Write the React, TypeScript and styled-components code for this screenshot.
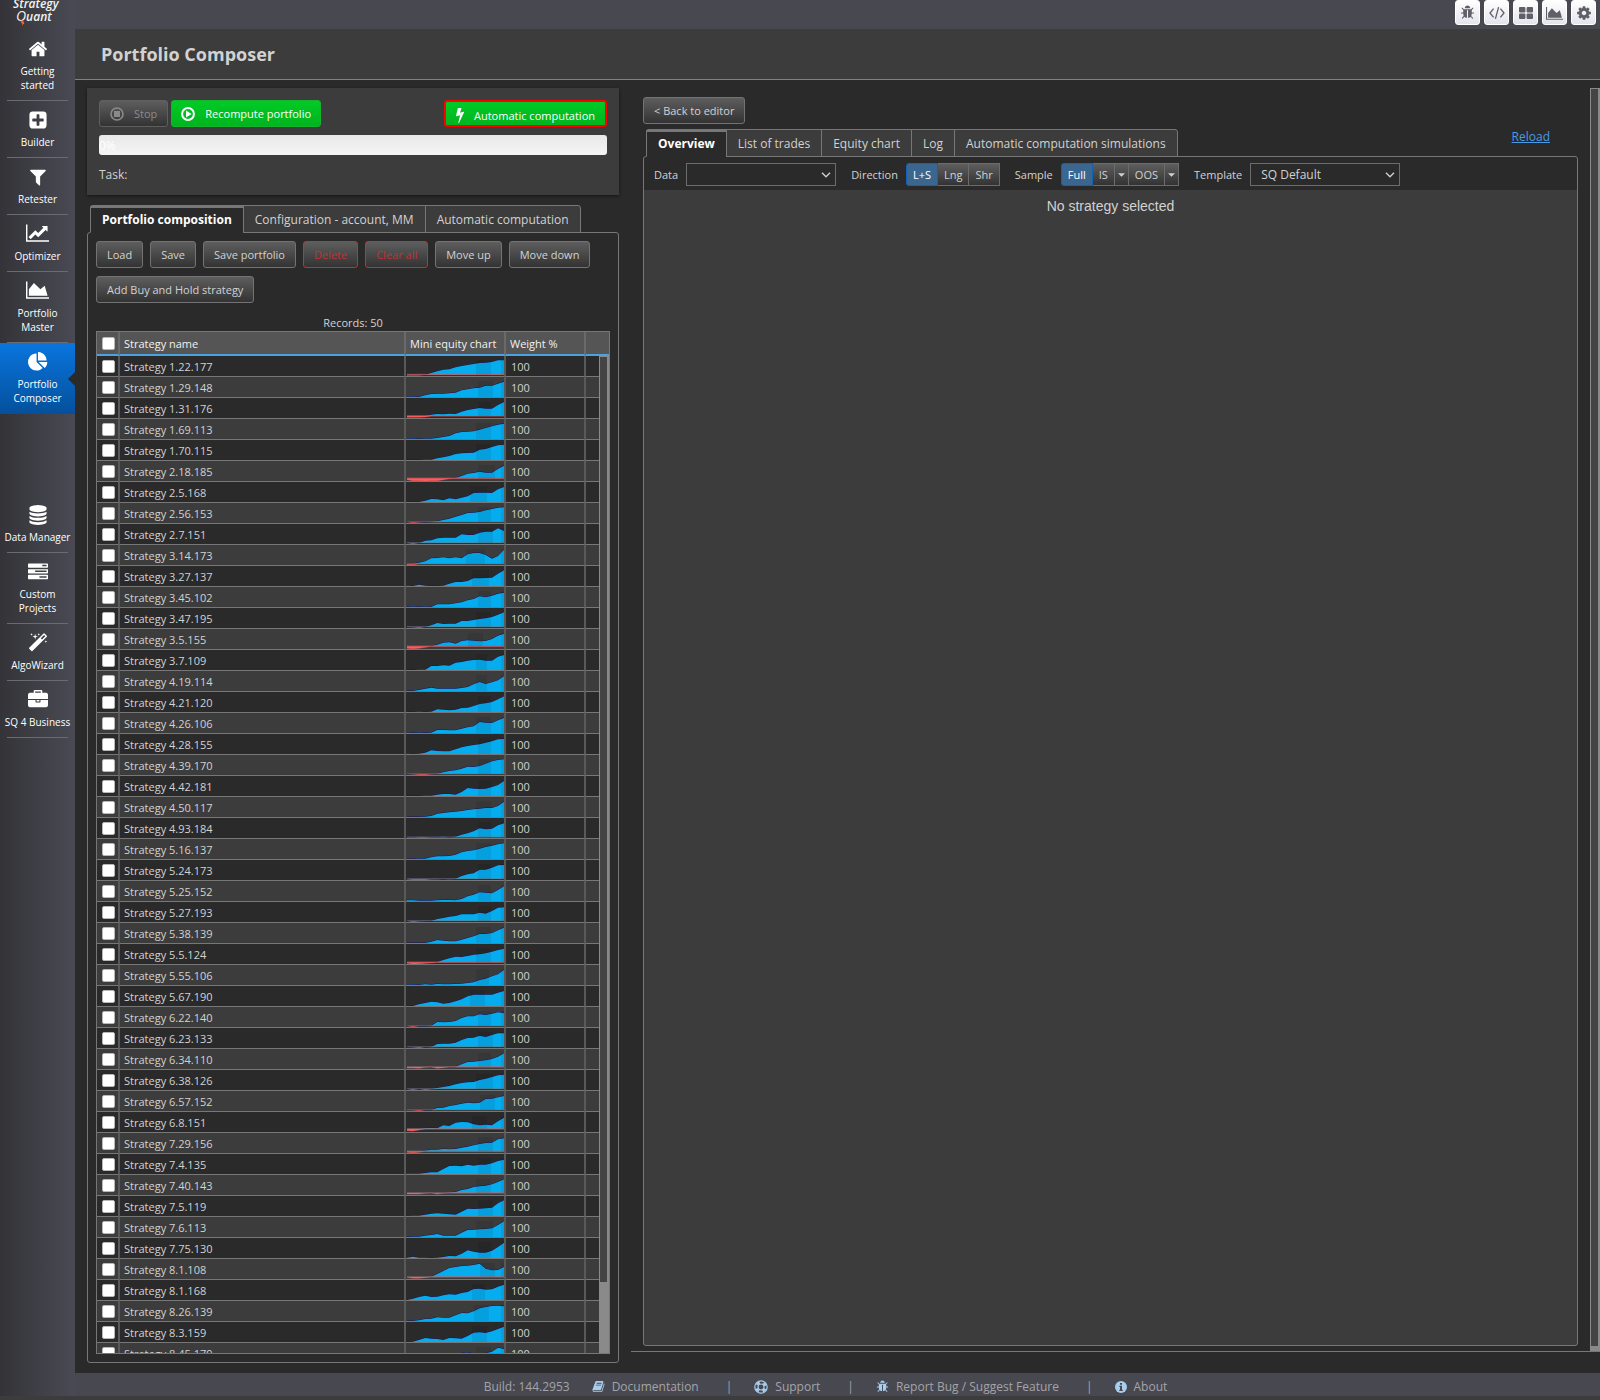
import React, { useState } from "react";
import styled, { createGlobalStyle, css } from "styled-components";

const color = {
  page: "#2a2a2a",
  panel: "#3c3c3c",
  bar: "#484851",
  line: "#777777",
  text: "#d2d2d2",
  blue: "#4aa3e0",
  link: "#4a9be6",
  danger: "#c43131",
};

const GlobalStyle = createGlobalStyle`
  *, *::before, *::after { box-sizing: border-box; }
  body {
    margin: 0;
    background: ${color.panel};
    color: ${color.text};
    font-family: "Open Sans", "Noto Sans", sans-serif;
    font-size: 11px;
  }
  button, select, input { font: inherit; color: inherit; }
  a { color: inherit; text-decoration: none; }
`;

/* ---------- icons ---------- */

type IconDef = { box?: number; d: string };

const icons: Record<string, IconDef> = {
  home: {
    d: "M1472 992v480q0 26-19 45t-45 19h-384v-384h-256v384h-384q-26 0-45-19t-19-45v-480q0-1 .5-3t.5-3l575-474 575 474q1 2 1 6zm223-69l-62 74q-8 9-21 11h-3q-13 0-21-7l-692-577-692 577q-12 8-24 7-13-2-21-11l-62-74q-8-10-7-23.5t11-21.5l719-599q32-26 76-26t76 26l244 204v-195q0-14 9-23t23-9h192q14 0 23 9t9 23v408l219 182q10 8 11 21.5t-7 23.5z",
  },
  plus: {
    d: "M1408 960v-128q0-26-19-45t-45-19h-320v-320q0-26-19-45t-45-19h-128q-26 0-45 19t-19 45v320h-320q-26 0-45 19t-19 45v128q0 26 19 45t45 19h320v320q0 26 19 45t45 19h128q26 0 45-19t19-45v-320h320q26 0 45-19t19-45zm256-544v960q0 119-84.5 203.5t-203.5 84.5h-960q-119 0-203.5-84.5t-84.5-203.5v-960q0-119 84.5-203.5t203.5-84.5h960q119 0 203.5 84.5t84.5 203.5z",
  },
  filter: {
    d: "M1595 295q17 41-14 70l-493 493v742q0 42-39 59-13 5-25 5-27 0-45-19l-256-256q-19-19-19-45v-486l-493-493q-31-29-14-70 17-39 59-39h1280q42 0 59 39z",
  },
  line: {
    box: 2048,
    d: "M2048 1536v128h-2048v-1536h128v1408h1920zm-128-1248v435q0 21-19.5 29.5t-35.5-7.5l-121-121-633 633q-10 10-23 10t-23-10l-233-233-416 416-192-192 585-585q10-10 23-10t23 10l233 233 464-464-121-121q-16-16-7.5-35.5t29.5-19.5h435q14 0 23 9t9 23z",
  },
  area: {
    box: 2048,
    d: "M2048 1536v128h-2048v-1536h128v1408h1920zm-384-1024l256 896h-1664v-576l448-576 576 576z",
  },
  pie: {
    d: "M768 890l546 546q-106 108-247.5 168t-298.5 60q-209 0-385.5-103t-279.5-279.5-103-385.5 103-385.5 279.5-279.5 385.5-103v762zm187 6h773q0 157-60 298.5t-168 247.5zm709-128h-768v-768q209 0 385.5 103t279.5 279.5 103 385.5z",
  },
  database: {
    d: "M896 768q237 0 443-43t325-127v170q0 69-103 128t-280 93.5-385 34.5-385-34.5-280-93.5-103-128v-170q119 84 325 127t443 43zm0 768q237 0 443-43t325-127v170q0 69-103 128t-280 93.5-385 34.5-385-34.5-280-93.5-103-128v-170q119 84 325 127t443 43zm0-384q237 0 443-43t325-127v170q0 69-103 128t-280 93.5-385 34.5-385-34.5-280-93.5-103-128v-170q119 84 325 127t443 43zm0-1152q208 0 385 34.5t280 93.5 103 128v128q0 69-103 128t-280 93.5-385 34.5-385-34.5-280-93.5-103-128v-128q0-69 103-128t280-93.5 385-34.5z",
  },
  tasks: {
    d: "M1024 1408h640v-128h-640v128zm-384-512h1024v-128h-1024v128zm640-512h384v-128h-384v128zm512 832v256q0 26-19 45t-45 19h-1664q-26 0-45-19t-19-45v-256q0-26 19-45t45-19h1664q26 0 45 19t19 45zm0-512v256q0 26-19 45t-45 19h-1664q-26 0-45-19t-19-45v-256q0-26 19-45t45-19h1664q26 0 45 19t19 45zm0-512v256q0 26-19 45t-45 19h-1664q-26 0-45-19t-19-45v-256q0-26 19-45t45-19h1664q26 0 45 19t19 45z",
  },
  wand: {
    d: "M1254 581l293-293-107-107-293 293zm447-293q0 27-18 45l-1286 1286q-18 18-45 18t-45-18l-198-198q-18-18-18-45t18-45l1286-1286q18-18 45-18t45 18l198 198q18 18 18 45zm-1351-190l98 30-98 30-30 98-30-98-98-30 98-30 30-98zm350 162l196 60-196 60-60 196-60-196-196-60 196-60 60-196zm930 478l98 30-98 30-30 98-30-98-98-30 98-30 30-98zm-640-640l98 30-98 30-30 98-30-98-98-30 98-30 30-98z",
  },
  briefcase: {
    d: "M640 256h512v-128h-512v128zm1152 640v480q0 66-47 113t-113 47h-1472q-66 0-113-47t-47-113v-480h672v160q0 26 19 45t45 19h320q26 0 45-19t19-45v-160h672zm-768 0v128h-256v-128h256zm768-480v384h-1792v-384q0-66 47-113t113-47h352v-160q0-40 28-68t68-28h576q40 0 68 28t28 68v160h352q66 0 113 47t47 113z",
  },
  bug: {
    d: "M1696 960q0 26-19 45t-45 19h-224q0 171-67 290l208 209q19 19 19 45t-19 45q-18 19-45 19t-45-19l-198-197q-5 5-15 13t-42 28.5-65 36.5-82 29-97 13v-896h-128v896q-51 0-101.5-13.5t-87-33-66-39-43.5-32.5l-15-14-183 207q-20 21-48 21-24 0-43-16-19-18-20.5-44.5t15.5-46.5l202-227q-58-114-58-274h-224q-26 0-45-19t-19-45 19-45 45-19h224v-294l-173-173q-19-19-19-45t19-45 45-19 45 19l173 173h844l173-173q19-19 45-19t45 19 19 45-19 45l-173 173v294h224q26 0 45 19t19 45zm-480-576h-640q0-133 93.5-226.5t226.5-93.5 226.5 93.5 93.5 226.5z",
  },
  cog: {
    d: "M1152 896q0-106-75-181t-181-75-181 75-75 181 75 181 181 75 181-75 75-181zm512-109v222q0 12-8 23t-20 13l-185 28q-19 54-39 91 35 50 107 138 10 12 10 25t-9 23q-27 37-99 108t-94 71q-12 0-26-9l-138-108q-44 23-91 38-16 136-29 186-7 28-36 28h-222q-14 0-24.5-8.5t-11.5-21.5l-28-184q-49-16-90-37l-141 107q-10 9-25 9-14 0-25-11-126-114-165-168-7-10-7-23 0-12 8-23 15-21 51-66.5t54-70.5q-27-50-41-99l-183-27q-13-2-21-12.5t-8-23.5v-222q0-12 8-23t19-13l186-28q14-46 39-92-40-57-107-138-10-12-10-24 0-10 9-23 26-36 98.5-107.5t94.5-71.5q13 0 26 10l138 107q44-23 91-38 16-136 29-186 7-28 36-28h222q14 0 24.5 8.5t11.5 21.5l28 184q49 16 90 37l142-107q9-9 24-9 13 0 25 10 129 119 165 170 7 8 7 22 0 12-8 23-15 21-51 66.5t-54 70.5q26 50 41 98l183 28q13 2 21 12.5t8 23.5z",
  },
  book: {
    d: "M1703 478q40 57 18 129l-275 906q-19 64-76.5 107.5t-122.5 43.5h-923q-77 0-148.5-53.5t-99.5-131.5q-24-67-2-127 0-4 3-27t4-37q1-8-3-21.5t-3-19.5q2-11 8-21t16.5-23.5 16.5-23.5q23-38 45-91.5t30-91.5q3-10 .5-30t-.5-28q3-11 17-28t17-23q21-36 42-92t25-90q1-9-2.5-32t.5-28q4-13 22-30.5t22-22.5q19-26 42.5-84.5t27.5-96.5q1-8-3-25.5t-2-26.5q2-8 9-18t18-23 17-21q8-12 16.5-30.5t15-35 16-36 19.5-32 26.5-23.5 36-11.5 47.5 5.5l-1 3q38-9 51-9h761q74 0 114 56t18 130l-274 906q-36 119-71.5 153.5t-128.5 34.5h-869q-27 0-38 15-11 16-1 43 24 70 144 70h923q29 0 56-15.5t35-41.5l300-987q7-22 5-57 38 15 59 43zm-1064 2q-4 13 2 22.5t20 9.5h608q13 0 25.5-9.5t16.5-22.5l21-64q4-13-2-22.5t-20-9.5h-608q-13 0-25.5 9.5t-16.5 22.5zm-83 256q-4 13 2 22.5t20 9.5h608q13 0 25.5-9.5t16.5-22.5l21-64q4-13-2-22.5t-20-9.5h-608q-13 0-25.5 9.5t-16.5 22.5z",
  },
};

function Icon({ name, size = 16 }: { name: string; size?: number }) {
  const { box = 1792, d } = icons[name];
  return (
    <svg width={size} height={size} viewBox={`0 0 ${box} ${box}`} fill="currentColor" aria-hidden="true">
      <path d={d} />
    </svg>
  );
}

const BoltIcon = () => (
  <svg width="8" height="15" viewBox="448 128 896 1664" fill="currentColor" aria-hidden="true">
    <path d="M1333 566q18 20 7 44l-540 1157q-13 25-42 25-4 0-14-2-17-5-25.5-19t-4.5-30l197-808-406 101q-4 1-12 1-18 0-31-11-18-15-13-39l201-825q4-14 16-23t28-9h328q19 0 32 12.5t13 29.5q0 8-5 18l-171 463 396-98q8-2 12-2 19 0 34 15z" />
  </svg>
);

const CodeIcon = () => (
  <svg width="16" height="14" viewBox="0 0 16 14" fill="none" stroke="currentColor" strokeWidth="1.3" aria-hidden="true">
    <path d="M4.6 2.6L1 7l3.6 4.4M11.4 2.6L15 7l-3.6 4.4M9.6 1.2L6.4 12.8" />
  </svg>
);

const TilesIcon = () => (
  <svg width="14" height="14" viewBox="0 0 14 14" fill="currentColor" aria-hidden="true">
    <rect x="0" y="1" width="6.4" height="5.4" rx="1" />
    <rect x="7.6" y="1" width="6.4" height="5.4" rx="1" />
    <rect x="0" y="7.6" width="6.4" height="5.4" rx="1" />
    <rect x="7.6" y="7.6" width="6.4" height="5.4" rx="1" />
  </svg>
);

const StopIcon = () => (
  <svg width="14" height="14" viewBox="0 0 14 14" aria-hidden="true">
    <circle cx="7" cy="7" r="6" fill="none" stroke="currentColor" strokeWidth="1.6" />
    <rect x="4" y="4" width="6" height="6" fill="currentColor" />
  </svg>
);

const PlayIcon = () => (
  <svg width="14" height="14" viewBox="0 0 14 14" aria-hidden="true">
    <circle cx="7" cy="7" r="5.9" fill="none" stroke="currentColor" strokeWidth="2" />
    <path d="M5 3.6L10.6 7 5 10.4z" fill="currentColor" />
  </svg>
);

const RingIcon = () => (
  <svg width="14" height="14" viewBox="0 0 14 14" fill="none" stroke="currentColor" aria-hidden="true">
    <circle cx="7" cy="7" r="6.2" strokeWidth="1.2" />
    <circle cx="7" cy="7" r="3" strokeWidth="1.2" />
    <circle cx="7" cy="7" r="4.6" strokeWidth="2.6" strokeDasharray="3.4 3.83" strokeDashoffset="-1.9" />
  </svg>
);

const InfoIcon = () => (
  <svg width="12" height="12" viewBox="0 0 12 12" aria-hidden="true">
    <circle cx="6" cy="6" r="6" fill="currentColor" />
    <path d="M5 2h2v1.8H5zM4.4 4.8H7v3.9h.8V10H4.3V8.7H5V6h-.6z" fill={color.bar} />
  </svg>
);

const Caret = () => (
  <svg width="7" height="4" viewBox="0 0 8 4" fill="currentColor" aria-hidden="true">
    <path d="M0 0h8L4 4z" />
  </svg>
);

/* ---------- shell ---------- */

const Shell = styled.div`
  display: flex;
  height: 100vh;
  padding-bottom: 4px;
  background: ${color.panel};
`;

const Sidebar = styled.nav`
  display: flex;
  flex-direction: column;
  flex: 0 0 75px;
  background: linear-gradient(90deg, #333338, #4a4a54);
  color: #ffffff;
  font-size: 10px;
`;

const Brand = styled.a`
  display: block;
  height: 30px;
  overflow: hidden;
`;

const NavGroup = styled.div`
  display: flex;
  flex-direction: column;

  & + & {
    margin-top: 82px;
  }
`;

const NavItem = styled.a<{ $active?: boolean }>`
  position: relative;
  display: flex;
  flex-direction: column;
  align-items: center;
  gap: 6px;
  padding: 10px 0 9px;
  line-height: 14px;
  text-align: center;
  white-space: pre-line;
  background: ${(p) => (p.$active ? "linear-gradient(#0a75de, #04509b)" : "none")};

  &::after {
    content: "";
    position: absolute;
    ${(p) =>
      p.$active
        ? css`
            right: 0;
            top: 29px;
            border: 7px solid transparent;
            border-left-width: 0;
            border-right-color: ${color.page};
          `
        : css`
            left: 7px;
            right: 7px;
            bottom: 0;
            height: 1px;
            background: #6a6a72;
          `}
  }
`;

const NavIcon = styled.span`
  display: flex;
  align-items: center;
  justify-content: center;
  height: 18px;
`;

const Main = styled.div`
  display: flex;
  flex-direction: column;
  flex: 1;
  min-width: 0;
`;

const TopBar = styled.div`
  display: flex;
  justify-content: flex-end;
  gap: 4px;
  height: 29px;
  padding: 0 4px 4px 0;
  background: ${color.bar};
`;

const ToolButton = styled.button<{ $low?: boolean }>`
  display: flex;
  align-items: center;
  justify-content: center;
  width: 25px;
  padding: ${(p) => (p.$low ? 4 : 0)}px 0 0;
  border: 1px solid #ffffff;
  border-radius: 3px;
  background: linear-gradient(#ffffff, #e4e4ec);
  color: #5f5f68;
`;

const TitleBar = styled.header`
  display: flex;
  align-items: center;
  height: 51px;
  padding: 0 26px;
  background: ${color.panel};
  border-bottom: 1px solid #808080;
`;

const Title = styled.h1`
  margin: 0;
  font-size: 18px;
  line-height: 24px;
  font-weight: 700;
`;

const Content = styled.main`
  display: grid;
  grid-template-columns: minmax(0, 556fr) minmax(0, 969fr);
  flex: 1;
  min-height: 0;
  background: ${color.page};
`;

const Footer = styled.footer`
  display: flex;
  align-items: center;
  justify-content: center;
  height: 23px;
  padding: 4px 24px 0 0;
  background: ${color.bar};
  color: #a4a4a8;
  font-size: 12px;
  line-height: 16px;
`;

const Build = styled.span`
  margin-right: 22px;
`;

const FooterLink = styled.a`
  display: flex;
  align-items: center;
  gap: 7px;

  svg {
    color: #a9cdec;
  }
`;

const FooterBar = styled.span`
  margin: 0 22px 0 27px;
`;

/* ---------- shared controls ---------- */

const Button = styled.button<{ $danger?: boolean }>`
  display: inline-flex;
  align-items: center;
  gap: 10px;
  height: 27px;
  padding: 0 10px;
  border: 1px solid ${(p) => (p.$danger ? color.danger : "#737373")};
  border-radius: 3px;
  background: linear-gradient(#5e5e5e, #333333);
  color: ${(p) => (p.$danger ? color.danger : color.text)};
  white-space: nowrap;

  &:disabled {
    color: #8a8a8a;
    border-color: #5f5f5f;
  }
`;

const GreenButton = styled(Button)<{ $outlined?: boolean }>`
  padding: 0 9px;
  border: 1px solid #14b52c;
  background: linear-gradient(#00cb26, #00b41f);
  color: #ffffff;
  font-weight: 500;
  ${(p) =>
    p.$outlined &&
    css`
      margin-left: auto;
      padding: 3px 10px 0;
      border: 2px solid #ff0000;
    `}
`;

const Tabs = styled.div`
  display: flex;
  position: relative;
  height: 28px;
  margin-bottom: -1px;
  padding-left: 3px;
`;

const Tab = styled.button<{ $active?: boolean }>`
  margin-right: -1px;
  padding: 0 11px;
  border: 1px solid ${color.line};
  background: ${color.panel};
  color: ${color.text};
  font-size: 12px;
  white-space: nowrap;

  &:first-child {
    border-top-left-radius: 3px;
  }
  &:last-of-type {
    border-top-right-radius: 3px;
  }

  ${(p) =>
    p.$active &&
    css`
      border-top: 3px solid ${color.line};
      border-bottom-color: ${color.page};
      padding-bottom: 2px;
      background: ${color.page};
      color: #ffffff;
      font-weight: 700;
    `}
`;

const Scrollbar = styled.div`
  width: 10px;
  background: #8a8a8a;
`;

const Thumb = styled.div`
  border: 1px solid #8a8a8a;
  border-right-width: 2px;
  background: #444444;
`;

/* ---------- left column ---------- */

const LeftColumn = styled.section`
  display: flex;
  flex-direction: column;
  min-height: 0;
  padding: 8px 12px 10px;
`;

const RunBox = styled.div`
  margin-bottom: 10px;
  padding: 12px;
  background: ${color.panel};
  box-shadow: 0 1px 3px rgba(0, 0, 0, 0.5);
`;

const RunButtons = styled.div`
  display: flex;
  gap: 3px;
`;

const Progress = styled.div`
  height: 20px;
  margin: 8px 0 12px;
  border-radius: 3px;
  background: linear-gradient(#e8e8e8, #f5f5f5);
  color: #ffffff;
  font-size: 12px;
  line-height: 21px;
`;

const Task = styled.div`
  font-size: 12px;
  line-height: 16px;
`;

const Panel = styled.div`
  display: flex;
  flex-direction: column;
  flex: 1;
  min-height: 0;
  border: 1px solid ${color.line};
  border-radius: 3px;
`;

const CompositionPanel = styled(Panel)`
  padding: 8px;
`;

const Actions = styled.div`
  display: flex;
  flex-wrap: wrap;
  gap: 8px 7px;
`;

const Records = styled.div`
  margin-top: 12px;
  padding-bottom: 1px;
  line-height: 15px;
  text-align: center;
`;

const TableFrame = styled.div`
  position: relative;
  flex: 1;
  min-height: 0;
  overflow: hidden;
  border: 1px solid ${color.line};
`;

const TableScroll = styled(Scrollbar)`
  position: absolute;
  top: 24px;
  right: 0;
  bottom: 0;
`;

const Table = styled.table`
  width: 100%;
  table-layout: fixed;
  border-collapse: separate;
  border-spacing: 0;
  line-height: 15px;

  th,
  td {
    padding: 0 0 0 4px;
    text-align: left;
    white-space: nowrap;
    border-right: 2px solid #595959;
  }
  th {
    height: 24px;
    background: #555555;
    color: #f2f2f2;
    font-weight: 500;
    border-right-color: #6a6a6a;
    border-bottom: 2px solid ${color.blue};
  }
  td {
    height: 21px;
    border-bottom: 1px solid ${color.line};
  }
  th:first-child,
  td:first-child {
    padding-left: 5px;
  }
  th:last-child,
  td:last-child {
    border-right: 0;
  }
  tbody tr:nth-child(even) {
    background: ${color.panel};
  }
`;

const ChartCell = styled.td`
  && {
    padding-left: 1px;
  }

  svg {
    display: block;
  }
`;

const WeightCell = styled.td`
  && {
    padding-left: 5px;
  }
`;

const Check = styled.input`
  appearance: none;
  display: block;
  width: 13px;
  height: 13px;
  margin: 1px 0 0;
  border: 1px solid #b8b8b8;
  border-radius: 2px;
  background: #ffffff;

  &:checked {
    background: ${color.blue};
  }
`;

/* ---------- right column ---------- */

const RightColumn = styled.section`
  display: flex;
  min-height: 0;
  margin: 8px 0 21px;
  border-bottom: 1px solid ${color.line};
`;

const Results = styled.div`
  display: flex;
  flex-direction: column;
  flex: 1;
  min-width: 0;
  padding: 9px 12px 5px;
`;

const BackRow = styled.div`
  display: flex;
  margin-bottom: 5px;
`;

const Reload = styled.a`
  margin: 0 28px 0 auto;
  color: ${color.link};
  font-size: 12px;
  line-height: 16px;
  text-decoration: underline;
`;

const ResultsPanel = styled(Panel)`
  background: ${color.panel};
`;

const Toolbar = styled.div`
  display: flex;
  align-items: center;
  gap: 15px;
  height: 33px;
  padding: 2px 10px 0;
  border-radius: 3px 3px 0 0;
  background: ${color.page};
`;

const Field = styled.div`
  display: flex;
  align-items: center;
  gap: 8px;
`;

const Select = styled.select`
  appearance: none;
  width: 150px;
  height: 23px;
  padding: 0 10px;
  border: 1px solid #6c6c6c;
  border-radius: 0;
  background: ${color.page};
  font-size: 12px;
`;

const SelectBox = styled.span`
  display: grid;
  align-items: center;

  select,
  svg {
    grid-area: 1 / 1;
  }
  svg {
    justify-self: end;
    margin-right: 5px;
    pointer-events: none;
  }
`;

const Segments = styled.div`
  display: flex;
`;

const Segment = styled.button<{ $on?: boolean; $caret?: boolean }>`
  display: flex;
  align-items: center;
  height: 23px;
  padding: 0 ${(p) => (p.$caret ? 3 : 6)}px;
  border: 1px solid #6c6c6c;
  border-left-width: 0;
  background: linear-gradient(#5e5e5e, #333333);

  &:first-child {
    border-radius: 3px 0 0 3px;
    border-left-width: 1px;
  }

  ${(p) =>
    p.$on &&
    css`
      border-color: #1660ad;
      background: #3a668f;
      color: #ffffff;
      font-weight: 500;
    `}
`;

const Empty = styled.p`
  margin: 8px 0 0;
  font-family: "Liberation Sans", Arial, sans-serif;
  font-size: 14px;
  line-height: 16px;
  text-align: center;
`;

/* ---------- data ---------- */

type Strategy = { name: string; depth: number; band: [number, number]; equity: number[] };

const s = (name: string, depth: number, band: [number, number], equity: number[]): Strategy => ({
  name: `Strategy ${name}`,
  depth,
  band,
  equity,
});

const strategies: Strategy[] = [
  s("1.22.177", 4, [207, 252], [-2, -2, -2, 0, 5, 10, 15, 16, 22, 26, 29, 32, 35, 36, 38, 43, 43]),
  s("1.29.148", 0, [213, 258], [1, 1, 0, 5, 9, 10, 10, 11, 13, 20, 23, 26, 28, 34, 34, 40, 46]),
  s("1.31.176", 6, [213, 252], [-4, -4, -4, -3, 4, 6, 5, 7, 6, 13, 18, 21, 24, 22, 22, 33, 42]),
  s("1.69.113", 0, [207, 252], [1, 1, 0, 1, 1, 3, 6, 9, 17, 21, 22, 23, 28, 33, 38, 43, 46]),
  s("1.70.115", 0, [207, 252], [0, 0, 0, 1, 1, 5, 8, 12, 18, 20, 21, 22, 31, 33, 39, 44, 46]),
  s("2.18.185", 8, [213, 264], [-4, -7, -7, -8, -7, -7, -4, -1, 1, 7, 14, 16, 20, 17, 17, 28, 38]),
  s("2.5.168", 0, [189, 240], [0, 0, 0, 4, 9, 8, 5, 11, 8, 13, 17, 27, 28, 28, 27, 38, 45]),
  s("2.56.153", 3, [213, 252], [0, -2, -1, 0, 1, 2, 6, 10, 16, 21, 27, 28, 30, 35, 39, 43, 44]),
  s("2.7.151", 3, [213, 258], [1, -2, 0, 7, 8, 14, 16, 16, 16, 26, 24, 24, 31, 34, 34, 44, 36]),
  s("3.14.173", 3, [177, 234], [-2, -2, 4, 8, 17, 18, 20, 17, 20, 17, 29, 33, 33, 27, 16, 24, 43]),
  s("3.27.137", 0, [195, 246], [1, 0, 4, 1, 0, 0, 1, 7, 12, 12, 15, 23, 23, 24, 25, 37, 47]),
  s("3.45.102", 0, [213, 252], [0, 1, 0, 1, 0, 8, 8, 8, 11, 14, 20, 24, 32, 29, 34, 40, 43]),
  s("3.47.195", 3, [207, 252], [1, -1, -2, 0, 5, 12, 9, 10, 10, 18, 18, 21, 24, 26, 30, 37, 44]),
  s("3.5.155", 8, [183, 228], [-6, -7, -6, -3, 0, 5, 11, 12, 8, 16, 18, 17, 15, 16, 22, 32, 38]),
  s("3.7.109", 0, [207, 240], [0, 0, 1, 1, 12, 12, 14, 13, 22, 24, 28, 30, 31, 28, 28, 40, 45]),
  s("4.19.114", 0, [207, 240], [0, 0, 3, 7, 10, 7, 7, 7, 7, 9, 12, 20, 27, 21, 26, 32, 44]),
  s("4.21.120", 0, [213, 252], [0, 0, 1, 0, 1, 8, 7, 5, 7, 12, 13, 18, 24, 26, 30, 38, 47]),
  s("4.26.106", 0, [207, 252], [1, 0, 1, 0, 1, 9, 9, 8, 8, 13, 17, 20, 33, 31, 30, 38, 45]),
  s("4.28.155", 0, [213, 252], [1, 0, 1, 4, 11, 9, 8, 8, 14, 20, 24, 27, 29, 34, 38, 44, 45]),
  s("4.39.170", 3, [213, 252], [0, -1, -2, -2, -1, 1, 5, 9, 11, 16, 22, 21, 24, 31, 38, 42, 44]),
  s("4.42.181", 0, [213, 252], [0, 0, 0, 1, 1, 4, 6, 6, 4, 12, 24, 22, 21, 22, 27, 33, 45]),
  s("4.50.117", 0, [207, 252], [0, 0, 0, 1, 3, 10, 12, 14, 16, 18, 21, 23, 25, 27, 27, 33, 46]),
  s("4.93.184", 2, [213, 252], [1, 1, -1, -1, 1, 1, 2, 0, 2, 8, 12, 18, 27, 24, 26, 36, 42]),
  s("5.16.137", 0, [207, 252], [0, 0, 1, 1, 5, 8, 8, 9, 13, 20, 24, 26, 31, 36, 40, 44, 47]),
  s("5.24.173", 3, [213, 252], [-1, -2, -2, -2, -1, -1, 0, -1, 1, 9, 14, 17, 28, 28, 34, 41, 42]),
  s("5.25.152", 0, [213, 252], [2, 2, 1, 1, 1, 2, 3, 3, 2, 6, 14, 19, 26, 25, 23, 33, 44]),
  s("5.27.193", 3, [213, 252], [0, -2, -1, 1, 0, 6, 9, 13, 15, 20, 20, 20, 25, 22, 30, 40, 41]),
  s("5.38.139", 0, [207, 252], [0, 0, 0, 0, 4, 9, 7, 5, 5, 10, 15, 20, 27, 27, 30, 38, 46]),
  s("5.5.124", 5, [207, 252], [-3, -5, -4, -3, -2, 1, 7, 12, 17, 16, 19, 23, 24, 27, 32, 37, 41]),
  s("5.55.106", 0, [207, 246], [1, 1, 0, 2, 1, 3, 2, 2, 3, 4, 6, 8, 15, 19, 26, 32, 45]),
  s("5.67.190", 0, [189, 234], [0, 0, 5, 9, 13, 11, 7, 9, 14, 20, 29, 34, 34, 34, 34, 40, 45]),
  s("6.22.140", 3, [213, 252], [0, -2, 0, 0, 1, 12, 11, 12, 15, 24, 29, 29, 35, 33, 37, 41, 38]),
  s("6.23.133", 3, [213, 258], [0, -1, -2, 0, -1, 9, 10, 10, 13, 21, 27, 28, 34, 30, 36, 41, 41]),
  s("6.34.110", 6, [213, 252], [-3, -3, -4, -1, 0, -4, -2, 0, 1, 8, 15, 16, 18, 20, 24, 31, 41]),
  s("6.38.126", 3, [207, 258], [0, -2, 0, -2, -1, 3, 6, 9, 14, 18, 20, 21, 27, 31, 36, 41, 43]),
  s("6.57.152", 3, [219, 264], [1, -1, -2, 0, 0, 6, 7, 12, 15, 19, 22, 20, 22, 33, 34, 38, 42]),
  s("6.8.151", 9, [195, 240], [-5, -6, -3, 2, 3, 2, 11, 9, 19, 21, 20, 14, 11, 13, 11, 23, 34]),
  s("7.29.156", 5, [213, 258], [-3, -4, -3, 2, 5, 5, 7, 6, 7, 11, 14, 18, 22, 25, 26, 36, 39]),
  s("7.4.135", 0, [213, 252], [1, 1, 1, 3, 5, 5, 15, 24, 25, 23, 28, 25, 28, 28, 32, 39, 43]),
  s("7.40.143", 6, [207, 252], [-3, -3, -3, -1, 0, -3, -1, 1, 3, 9, 12, 18, 20, 22, 26, 33, 41]),
  s("7.5.119", 0, [213, 258], [-1, 1, 1, 4, 7, 8, 7, 5, 4, 13, 22, 21, 22, 23, 25, 38, 47]),
  s("7.6.113", 0, [207, 258], [-1, 1, 1, 4, 6, 9, 4, 4, 4, 13, 21, 22, 23, 24, 26, 36, 47]),
  s("7.75.130", 0, [213, 252], [1, 4, 1, 1, 0, 1, 3, 6, 5, 13, 23, 19, 16, 16, 22, 33, 46]),
  s("8.1.108", 6, [219, 264], [-1, -4, -4, -2, 1, 9, 18, 27, 30, 33, 34, 36, 40, 25, 20, 21, 30]),
  s("8.1.168", 0, [195, 234], [0, 4, 9, 13, 9, 10, 14, 17, 16, 21, 24, 33, 34, 31, 32, 40, 46]),
  s("8.26.139", 0, [201, 246], [0, 0, 2, 6, 7, 11, 10, 10, 17, 24, 23, 29, 38, 42, 45, 46, 44]),
  s("8.3.159", 0, [195, 240], [0, 1, 6, 12, 10, 9, 6, 12, 11, 10, 18, 28, 29, 27, 32, 39, 46]),
  s("8.45.179", 0, [207, 252], [0, 0, 0, 0, 0, 1, 5, 8, 12, 30, 31, 28, 26, 29, 34, 46, 42]),
];

const CHART_W = 291;
const CHART_H = 60;

function EquityChart({ depth, band, equity }: Strategy) {
  const base = CHART_H - depth;
  const step = CHART_W / (equity.length - 1);
  const at = (v: number, i: number) => `${Math.round(i * step)},${base - v}`;
  const up = equity.map((v) => Math.max(v, 0));
  const down = equity.map((v) => Math.min(v, 0));
  return (
    <svg width="97" height="20" viewBox={`0 0 ${CHART_W} ${CHART_H}`} aria-hidden="true">
      <polyline points={up.map(at).join(" ")} fill="none" stroke="#15155c" strokeWidth="3" />
      <polygon points={`0,${base} ${up.map(at).join(" ")} ${CHART_W},${base}`} fill="#05adef" />
      {depth > 0 && (
        <>
          <path d={`M0 ${base - 1}H${CHART_W}`} stroke="#777777" strokeWidth="2" />
          <polygon
            points={`0,${base} ${down.map(at).join(" ")} ${CHART_W},${base}`}
            fill="#ff5c58"
            stroke="#ff5c58"
            strokeWidth={depth > 3 ? 1 : 0}
          />
        </>
      )}
      <rect x={band[0]} y="12" width={band[1] - band[0]} height={base - 12} fill="#000000" opacity="0.08" />
      <rect x="282" y="12" width="9" height={base - 12} fill="#000000" opacity="0.08" />
    </svg>
  );
}

const mainNav = [
  { label: "Getting\nstarted", icon: "home", size: 20 },
  { label: "Builder", icon: "plus", size: 20 },
  { label: "Retester", icon: "filter", size: 20 },
  { label: "Optimizer", icon: "line", size: 23 },
  { label: "Portfolio\nMaster", icon: "area", size: 23 },
  { label: "Portfolio\nComposer", icon: "pie", size: 20, active: true },
];

const toolNav = [
  { label: "Data Manager", icon: "database", size: 20 },
  { label: "Custom\nProjects", icon: "tasks", size: 20 },
  { label: "AlgoWizard", icon: "wand", size: 20 },
  { label: "SQ 4 Business", icon: "briefcase", size: 20 },
];

type NavEntry = { label: string; icon: string; size: number; active?: boolean };

const NavList = ({ items }: { items: NavEntry[] }) => (
  <NavGroup>
    {items.map((item) => (
      <NavItem key={item.label} href="#" $active={item.active} aria-current={item.active ? "page" : undefined}>
        <NavIcon>
          <Icon name={item.icon} size={item.size} />
        </NavIcon>
        {item.label}
      </NavItem>
    ))}
  </NavGroup>
);

const Logo = () => (
  <svg width="75" height="30" viewBox="0 0 75 30" aria-hidden="true">
    <g fill="#f2f2f2" fontFamily="Open Sans, sans-serif" fontStyle="italic" fontWeight="600" fontSize="12">
      <text x="13" y="8">Strategy</text>
      <text x="16" y="21"><tspan fontSize="14" fontWeight="400">Q</tspan>uant</text>
    </g>
    <path d="M20.5 20.500l3 .3-.6 5.400z" fill="#ee5a24" />
  </svg>
);

function TabBar({ tabs, children }: { tabs: string[]; children?: React.ReactNode }) {
  const [current, setCurrent] = useState(0);
  return (
    <Tabs role="tablist">
      {tabs.map((tab, i) => (
        <Tab key={tab} role="tab" aria-selected={i === current} $active={i === current} onClick={() => setCurrent(i)}>
          {tab}
        </Tab>
      ))}
      {children}
    </Tabs>
  );
}

function Dropdown({ id, options }: { id: string; options: string[] }) {
  return (
    <SelectBox>
      <Select id={id}>
        {options.map((option) => (
          <option key={option}>{option}</option>
        ))}
      </Select>
      <svg width="10" height="6" viewBox="0 0 10 6" fill="none" stroke="currentColor" strokeWidth="1.3" aria-hidden="true">
        <path d="M1 .8l4 4 4-4" />
      </svg>
    </SelectBox>
  );
}

function StrategyTable() {
  return (
    <TableFrame>
      <Table>
        <colgroup>
          <col width="23" />
          <col />
          <col width="100" />
          <col width="80" />
          <col width="23" />
        </colgroup>
        <thead>
          <tr>
            <th>
              <Check type="checkbox" aria-label="Select all strategies" />
            </th>
            <th>Strategy name</th>
            <th>Mini equity chart</th>
            <th>Weight %</th>
            <th />
          </tr>
        </thead>
        <tbody>
          {strategies.map((row) => (
            <tr key={row.name}>
              <td>
                <Check type="checkbox" aria-label={row.name} />
              </td>
              <td>{row.name}</td>
              <ChartCell>
                <EquityChart {...row} />
              </ChartCell>
              <WeightCell>100</WeightCell>
              <td />
            </tr>
          ))}
        </tbody>
      </Table>
      <TableScroll>
        <Thumb style={{ height: "93%" }} />
      </TableScroll>
    </TableFrame>
  );
}

export default function App() {
  return (
    <>
      <GlobalStyle />
      <Shell>
        <Sidebar>
          <Brand href="#" aria-label="StrategyQuant">
            <Logo />
          </Brand>
          <NavList items={mainNav} />
          <NavList items={toolNav} />
        </Sidebar>
        <Main>
          <TopBar>
            <ToolButton aria-label="Debug"><Icon name="bug" size={15} /></ToolButton>
            <ToolButton aria-label="Code"><CodeIcon /></ToolButton>
            <ToolButton aria-label="Layout"><TilesIcon /></ToolButton>
            <ToolButton $low aria-label="Charts"><Icon name="area" size={17} /></ToolButton>
            <ToolButton aria-label="Settings"><Icon name="cog" size={16} /></ToolButton>
          </TopBar>
          <TitleBar>
            <Title>Portfolio Composer</Title>
          </TitleBar>
          <Content>
            <LeftColumn>
              <RunBox>
                <RunButtons>
                  <Button disabled><StopIcon />Stop</Button>
                  <GreenButton><PlayIcon />Recompute portfolio</GreenButton>
                  <GreenButton $outlined><BoltIcon />Automatic computation</GreenButton>
                </RunButtons>
                <Progress role="progressbar" aria-valuenow={0}>0%</Progress>
                <Task>Task:</Task>
              </RunBox>
              <TabBar tabs={["Portfolio composition", "Configuration - account, MM", "Automatic computation"]} />
              <CompositionPanel>
                <Actions>
                  <Button>Load</Button>
                  <Button>Save</Button>
                  <Button>Save portfolio</Button>
                  <Button $danger>Delete</Button>
                  <Button $danger>Clear all</Button>
                  <Button>Move up</Button>
                  <Button>Move down</Button>
                  <Button>Add Buy and Hold strategy</Button>
                </Actions>
                <Records>Records: 50</Records>
                <StrategyTable />
              </CompositionPanel>
            </LeftColumn>
            <RightColumn>
              <Results>
                <BackRow>
                  <Button>&lt; Back to editor</Button>
                </BackRow>
                <TabBar tabs={["Overview", "List of trades", "Equity chart", "Log", "Automatic computation simulations"]}>
                  <Reload href="#">Reload</Reload>
                </TabBar>
                <ResultsPanel>
                  <Toolbar>
                    <Field>
                      <label htmlFor="data">Data</label>
                      <Dropdown id="data" options={[""]} />
                    </Field>
                    <Field>
                      <span>Direction</span>
                      <Segments>
                        <Segment $on>L+S</Segment>
                        <Segment>Lng</Segment>
                        <Segment>Shr</Segment>
                      </Segments>
                    </Field>
                    <Field>
                      <span>Sample</span>
                      <Segments>
                        <Segment $on>Full</Segment>
                        <Segment>IS</Segment>
                        <Segment $caret aria-label="IS options"><Caret /></Segment>
                        <Segment>OOS</Segment>
                        <Segment $caret aria-label="OOS options"><Caret /></Segment>
                      </Segments>
                    </Field>
                    <Field>
                      <label htmlFor="template">Template</label>
                      <Dropdown id="template" options={["SQ Default"]} />
                    </Field>
                  </Toolbar>
                  <Empty>No strategy selected</Empty>
                </ResultsPanel>
              </Results>
              <Scrollbar>
                <Thumb style={{ height: "99.7%" }} />
              </Scrollbar>
            </RightColumn>
          </Content>
          <Footer>
            <Build>Build: 144.2953</Build>
            <FooterLink href="#"><Icon name="book" size={13} />Documentation</FooterLink>
            <FooterBar>|</FooterBar>
            <FooterLink href="#"><RingIcon />Support</FooterLink>
            <FooterBar>|</FooterBar>
            <FooterLink href="#"><Icon name="bug" size={13} />Report Bug / Suggest Feature</FooterLink>
            <FooterBar>|</FooterBar>
            <FooterLink href="#"><InfoIcon />About</FooterLink>
          </Footer>
        </Main>
      </Shell>
    </>
  );
}
